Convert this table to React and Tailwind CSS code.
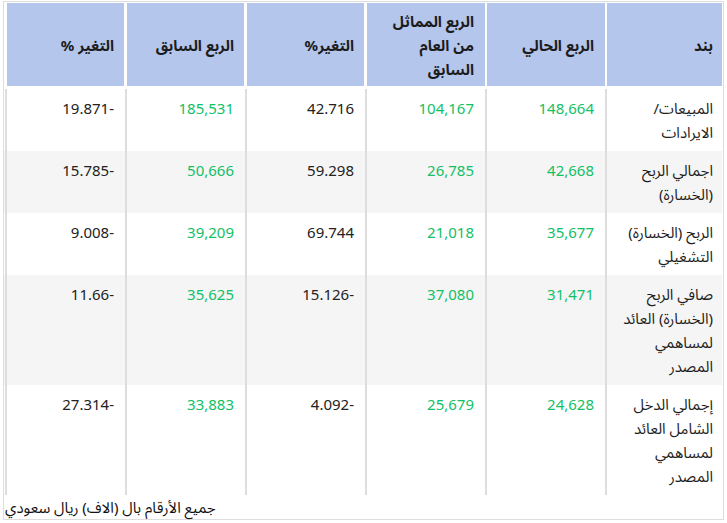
import React from "react";

const rows = [
  { label: ["المبيعات/", "الايرادات"], v: ["148,664", "104,167", "42.716", "185,531", "-19.871"] },
  { label: ["اجمالي الربح", "(الخسارة)"], v: ["42,668", "26,785", "59.298", "50,666", "-15.785"] },
  { label: ["الربح (الخسارة)", "التشغيلي"], v: ["35,677", "21,018", "69.744", "39,209", "-9.008"] },
  { label: ["صافي الربح", "(الخسارة) العائد", "لمساهمي", "المصدر"], v: ["31,471", "37,080", "-15.126", "35,625", "-11.66"] },
  { label: ["إجمالي الدخل", "الشامل العائد", "لمساهمي", "المصدر"], v: ["24,628", "25,679", "-4.092", "33,883", "-27.314"] },
];

const green = [true, true, false, true, false];

function Lines({ lines }) {
  return lines.map((l, i) => (
    <React.Fragment key={i}>
      {i > 0 && <br />}
      {l}
    </React.Fragment>
  ));
}

export default function App() {
  return (
    <div className="bg-white w-[727px] h-[523px] pt-[1px] pl-[3px] [font-family:'Noto_Sans','Noto_Sans_Arabic','DejaVu_Sans',sans-serif] text-[15px] leading-[24px] text-[#222]">
      <div dir="rtl" className="w-[721px] border border-[#dddddd] pt-[1px]">
        {/* header */}
        <div className="flex h-[83px] mr-[1px] ml-[2px] mb-[3px] font-bold text-[#1c1c1c]">
          <div className="w-[115px] bg-[#b4c6ec] flex items-center pr-[9px] pl-[9px]">بند</div>
          <div className="w-[120px] border-r-2 border-white">
            <div className="h-full bg-[#b4c6ec] flex items-center pr-[11px] pl-[7px]">الربع الحالي</div>
          </div>
          <div className="w-[120px] border-r-2 border-white">
            <div className="h-full bg-[#b4c6ec] flex items-center pr-[11px] pl-[7px]">
              <span>الربع المماثل<br />من العام<br />السابق</span>
            </div>
          </div>
          <div className="w-[120px] border-r-[3px] border-white">
            <div className="h-full bg-[#b4c6ec] flex items-center pr-[10px] pl-[7px]">التغير%</div>
          </div>
          <div className="w-[120px] border-r-[3px] border-white">
            <div className="h-full bg-[#b4c6ec] flex items-center pr-[10px] pl-[7px]">الربع السابق</div>
          </div>
          <div className="w-[120px] border-r-[3px] border-white">
            <div className="h-full bg-[#b4c6ec] flex items-center pr-[10px] pl-[7px]">التغير %</div>
          </div>
        </div>
        {/* body */}
        {rows.map((r, ri) => (
          <div
            key={ri}
            className={`flex mr-[1px] ${ri % 2 === 1 ? "bg-[#f5f5f5]" : "bg-white"}`}
          >
            <div className="w-[115px] px-[9px] py-[7px] text-[#1e1e1e]">
              <Lines lines={r.label} />
            </div>
            {r.v.map((val, ci) => (
              <div
                key={ci}
                className={`${ci === 4 ? "w-[122px] border-l-2" : "w-[120px]"} border-r-2 border-[#dddddd] pr-[11px] pl-[7px] py-[7px] ${
                  green[ci] ? "text-[#12c066]" : "text-[#222]"
                }`}
              >
                {val}
              </div>
            ))}
          </div>
        ))}
        <div className="text-left h-[24px] pl-[1px] text-[#111]">جميع الأرقام بال (الاف) ريال سعودي</div>
      </div>
    </div>
  );
}
